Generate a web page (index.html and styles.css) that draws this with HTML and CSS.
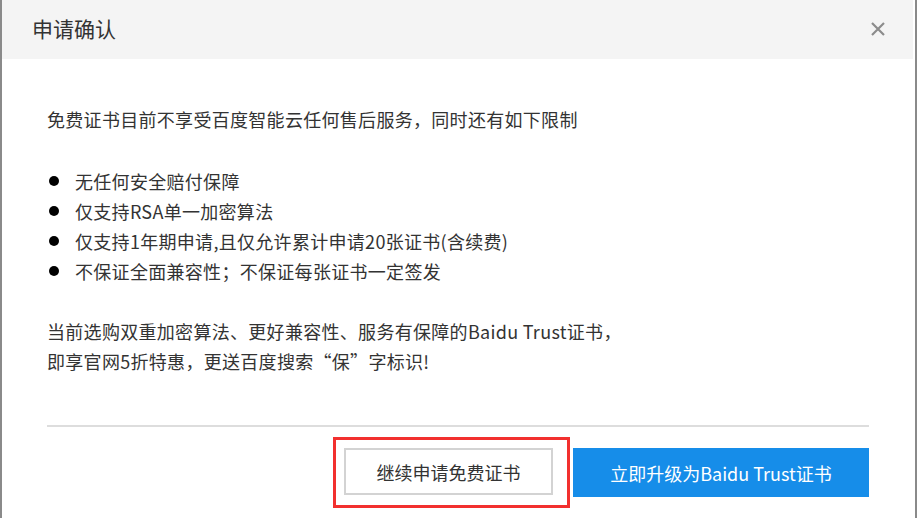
FILE: index.html
```html
<!DOCTYPE html>
<html lang="zh-CN">
  <head>
    <meta charset="UTF-8" />
    <title>申请确认</title>
    <link rel="stylesheet" href="styles.css">
  </head>
  <body>
    <div class="dialog">
      <div class="dialog-header">
        <span class="dialog-title">申请确认</span>
        <span class="close">
          <svg width="16" height="16" viewBox="0 0 16 16">
            <path d="M2 2 L14 14 M14 2 L2 14" stroke="#8c8c8c" stroke-width="2.2" fill="none" />
          </svg>
        </span>
      </div>
      <div class="dialog-body">
        <p class="intro">免费证书目前不享受百度智能云任何售后服务，同时还有如下限制</p>
        <ul class="limits">
          <li>无任何安全赔付保障</li>
          <li>仅支持RSA单一加密算法</li>
          <li>仅支持1年期申请,且仅允许累计申请20张证书(含续费)</li>
          <li>不保证全面兼容性；不保证每张证书一定签发</li>
        </ul>
        <p class="promo">
          当前选购双重加密算法、更好兼容性、服务有保障的Baidu Trust证书，<br />
          即享官网5折特惠，更送百度搜索“保”字标识!
        </p>
        <div class="divider"></div>
        <div class="dialog-footer">
          <div class="highlight">
            <button class="btn btn-default">继续申请免费证书</button>
          </div>
          <button class="btn btn-primary">立即升级为Baidu Trust证书</button>
        </div>
      </div>
    </div>
  </body>
</html>
```

FILE: styles.css
```css
body {
  margin: 0;
  font-family: "Noto Sans CJK SC", "Noto Sans", sans-serif;
  background-color: #ffffff;
  color: #333333;
}
.dialog {
  height: 518px;
  box-sizing: border-box;
  border-left: 2px solid #8a8a8a;
  border-right: 2px solid #8a8a8a;
  background-color: #ffffff;
  overflow: hidden;
}
.dialog-header {
  height: 59px;
  background-color: #f4f4f4;
  display: flex;
  align-items: center;
  justify-content: space-between;
  padding: 0 27px 0 30px;
  margin-right: 2px;
}
.dialog-title {
  font-size: 21px;
  color: #333333;
  line-height: 1;
  padding-bottom: 2px;
}
.close {
  display: flex;
  width: 16px;
  height: 16px;
  cursor: pointer;
  margin-bottom: 2px;
}
.dialog-body {
  padding: 45px 46px 0 45px;
  font-size: 18px;
  letter-spacing: 0.3px;
}
.intro {
  margin: 0;
  line-height: 30px;
}
.limits {
  list-style: none;
  margin: 32px 0 0;
  padding: 0;
}
.limits li {
  display: flex;
  align-items: center;
  line-height: 30px;
}
.limits li::before {
  content: "";
  width: 10px;
  height: 10px;
  border-radius: 50%;
  background-color: #000000;
  margin: 0 16px 0 2px;
  flex-shrink: 0;
}
.promo {
  margin: 30px 0 0;
  line-height: 30px;
}
.divider {
  height: 2px;
  background-color: #dddddd;
  margin-top: 49px;
}
.dialog-footer {
  display: flex;
  justify-content: flex-end;
  align-items: flex-start;
  gap: 3px;
  margin-top: 10px;
  letter-spacing: 0;
}
.highlight {
  border: 3px solid #f2302f;
  padding: 8px 14px 10px 8px;
}
.btn {
  font-family: inherit;
  font-size: 18px;
  cursor: pointer;
  border-radius: 0;
}
.btn-default {
  width: 209px;
  height: 47px;
  background-color: #ffffff;
  border: 2px solid #d3d3d3;
  color: #333333;
}
.btn-primary {
  width: 296px;
  height: 49px;
  margin-top: 11px;
  background-color: #168de9;
  border: none;
  color: #ffffff;
}
```
